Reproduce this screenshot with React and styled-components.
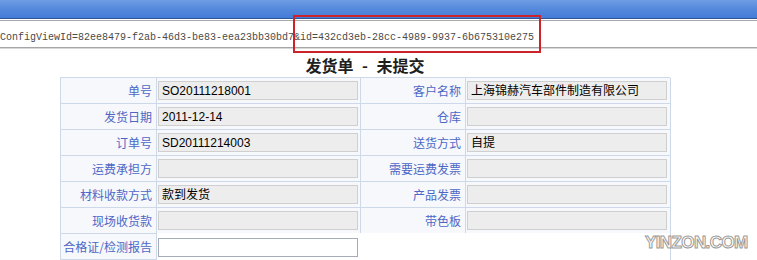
import styled, { createGlobalStyle } from "styled-components";

const GlobalStyle = createGlobalStyle`
  html, body {
    margin: 0;
    padding: 0;
    background: #fff;
  }
  body {
    width: 757px;
    height: 260px;
    overflow: hidden;
    font-family: "Liberation Sans", "Noto Sans CJK SC", sans-serif;
  }
`;

const rows = [
  ["单号", "SO20111218001", "客户名称", "上海锦赫汽车部件制造有限公司"],
  ["发货日期", "2011-12-14", "仓库", ""],
  ["订单号", "SD20111214003", "送货方式", "自提"],
  ["运费承担方", "", "需要运费发票", ""],
  ["材料收款方式", "款到发货", "产品发票", ""],
  ["现场收货款", "", "带色板", ""],
];

const App = () => {
  return (
    <Page>
      <GlobalStyle />
      <TitleBar />
      <AddressBar>
        ConfigViewId=82ee8479-f2ab-46d3-be83-eea23bb30bd7&amp;id=432cd3eb-28cc-4989-9937-6b675310e275
      </AddressBar>
      <Highlight />
      <Content>
        <Heading>发货单 - 未提交</Heading>
        <Form>
          {rows.map((r, i) => (
            <Row key={i}>
              <Label>{r[0]}</Label>
              <Cell>
                <Field>{r[1]}</Field>
              </Cell>
              <Label>{r[2]}</Label>
              <Cell>
                <Field>{r[3]}</Field>
              </Cell>
            </Row>
          ))}
          <Row>
            <Label>合格证/检测报告</Label>
            <Cell $span>
              <Field $editable />
            </Cell>
          </Row>
        </Form>
      </Content>
      <Watermark>YINZON.COM</Watermark>
    </Page>
  );
};

export default App;

const Page = styled.div`
  width: 757px;
  height: 260px;
  overflow: hidden;
  position: relative;
`;

const TitleBar = styled.div`
  height: 18px;
  background: linear-gradient(to bottom, #6f9de4 0%, #5489dc 50%, #447bd6 100%);
  border-bottom: 1px solid #2f5597;
`;

const AddressBar = styled.div`
  height: 28px;
  margin-top: 1px;
  border-top: 1px solid #a9a9a9;
  border-bottom: 1px solid #a6a6a6;
  box-shadow: 0 1px 0 #d8d8d8;
  padding-top: 4px;
  box-sizing: border-box;
  font-family: "Liberation Mono", monospace;
  font-size: 10px;
  line-height: 26px;
  color: #4a4a4a;
  white-space: nowrap;
  overflow: hidden;
`;

const Highlight = styled.div`
  position: absolute;
  left: 293px;
  top: 15px;
  width: 248px;
  height: 38px;
  border: 2px solid #cc2229;
  box-sizing: border-box;
  z-index: 2;
`;

const Content = styled.div`
  width: 610px;
  margin-left: 60px;
  padding-top: 7px;
`;

const Heading = styled.div`
  text-align: center;
  font-family: "Noto Sans CJK SC", sans-serif;
  font-weight: bold;
  font-size: 16px;
  line-height: 20px;
  height: 22px;
  color: #1e1e1e;
  white-space: pre;
  word-spacing: 5px;
`;

const Form = styled.div`
  border-top: 1px solid #cdd9e9;
  border-left: 1px solid #cdd9e9;
  background: #f6f8fb;
`;

const Row = styled.div`
  display: grid;
  grid-template-columns: 96px 204px 105px 205px;
  height: 26px;
`;

const Label = styled.div`
  border-right: 1px solid #cdd9e9;
  border-bottom: 1px solid #cdd9e9;
  text-align: right;
  padding-right: 4px;
  font-family: "Noto Sans CJK SC", sans-serif;
  font-size: 12px;
  line-height: 25px;
  color: #4e67c6;
  white-space: nowrap;
`;

const Cell = styled.div`
  grid-column: ${(p) => (p.$span ? "span 3" : "auto")};
  border-right: 1px solid #cdd9e9;
  border-bottom: ${(p) => (p.$span ? "none" : "1px solid #cdd9e9")};
  background: ${(p) => (p.$span ? "#fff" : "transparent")};
  display: flex;
  align-items: center;
  padding-left: 1px;
  ${(p) => (p.$span ? "margin-top: -1px; padding-top: 1px;" : "")}
`;

const Field = styled.div`
  width: 200px;
  height: 19px;
  box-sizing: border-box;
  border: 1px solid ${(p) => (p.$editable ? "#a5acb5" : "#cfcfcf")};
  background: ${(p) => (p.$editable ? "#fff" : "#ededed")};
  padding: 2px 0 0 3px;
  font-family: "Liberation Sans", "Noto Sans CJK SC", sans-serif;
  font-size: 12px;
  line-height: 15px;
  color: #000;
  white-space: nowrap;
  overflow: hidden;
`;

const Watermark = styled.div`
  position: absolute;
  left: 645px;
  top: 233px;
  font-family: "Liberation Sans", sans-serif;
  font-weight: bold;
  font-size: 17px;
  color: #fff;
  -webkit-text-stroke: 1px #9a9a9a;
  letter-spacing: -0.6px;
`;
